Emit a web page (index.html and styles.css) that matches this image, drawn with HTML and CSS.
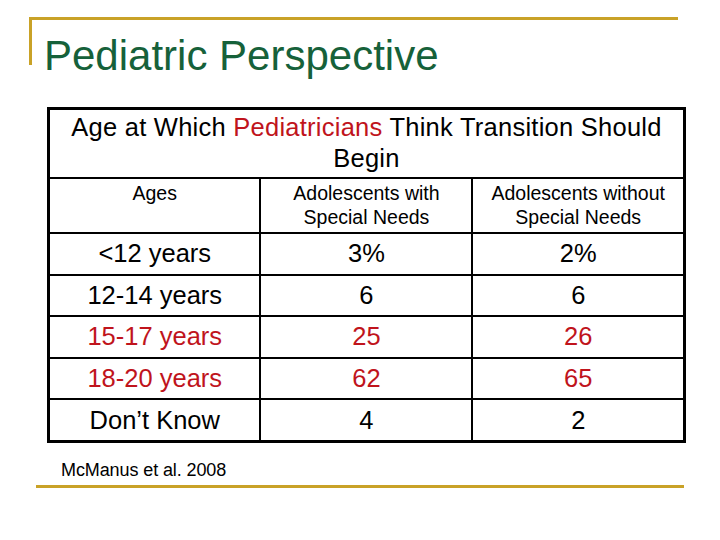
FILE: index.html
```html
<!DOCTYPE html>
<html>
<head>
<meta charset="utf-8">
<link rel="stylesheet" href="styles.css">
</head>
<body>
<div class="slide">
  <div class="frame">
    <h1 class="title">Pediatric Perspective</h1>
  </div>
  <table class="data">
    <tr class="caption-row">
      <td colspan="3">Age at Which <span class="red">Pediatricians</span> Think Transition Should Begin</td>
    </tr>
    <tr class="head-row">
      <td>Ages</td>
      <td>Adolescents with<br>Special Needs</td>
      <td>Adolescents without<br>Special Needs</td>
    </tr>
    <tr class="row"><td>&lt;12 years</td><td>3%</td><td>2%</td></tr>
    <tr class="row"><td>12-14 years</td><td>6</td><td>6</td></tr>
    <tr class="row red"><td>15-17 years</td><td>25</td><td>26</td></tr>
    <tr class="row red"><td>18-20 years</td><td>62</td><td>65</td></tr>
    <tr class="row"><td>Don’t Know</td><td>4</td><td>2</td></tr>
  </table>
  <div class="source">McManus et al. 2008</div>
  <div class="bottom-rule"></div>
</div>
</body>
</html>
```
FILE: styles.css
```css
html, body {
  margin: 0;
  padding: 0;
  background: #ffffff;
}
.slide {
  width: 720px;
  height: 540px;
  position: relative;
  font-family: "Liberation Sans", Arial, sans-serif;
  color: #000;
  padding-top: 17px;
  box-sizing: border-box;
}
.frame {
  margin-left: 29px;
  width: 649px;
  height: 48px;
  border-top: 3px solid #c9a227;
  border-left: 3px solid #c9a227;
  box-sizing: border-box;
}
.title {
  margin: 0;
  padding: 15px 0 0 12px;
  font-weight: normal;
  font-size: 42px;
  line-height: 42px;
  color: #16613a;
  white-space: nowrap;
}
.data {
  margin: 42px 0 0 47px;
  width: 639px;
  border-collapse: collapse;
  border: 3px solid #000;
  table-layout: fixed;
}
.data td {
  border: 2px solid #000;
  text-align: center;
  padding: 0;
}
.data td:nth-child(1) { width: 209px; }
.data td:nth-child(2) { width: 212px; }
.caption-row td {
  font-size: 25.5px;
  line-height: 31px;
  letter-spacing: 0.25px;
  height: 65px;
  padding-top: 2px;
  vertical-align: top;
}
.head-row td {
  font-size: 19.5px;
  line-height: 24px;
  height: 51px;
  vertical-align: top;
  padding-top: 2px;
}
.row td {
  font-size: 25.5px;
  height: 39.6px;
  vertical-align: middle;
}
.red, .row.red td {
  color: #c0141c;
}
.source {
  margin: 18px 0 0 61px;
  font-size: 18px;
  letter-spacing: -0.1px;
  line-height: 18px;
}
.bottom-rule {
  margin: 6px 0 0 36px;
  width: 648px;
  height: 3px;
  background: #c9a227;
}
```
